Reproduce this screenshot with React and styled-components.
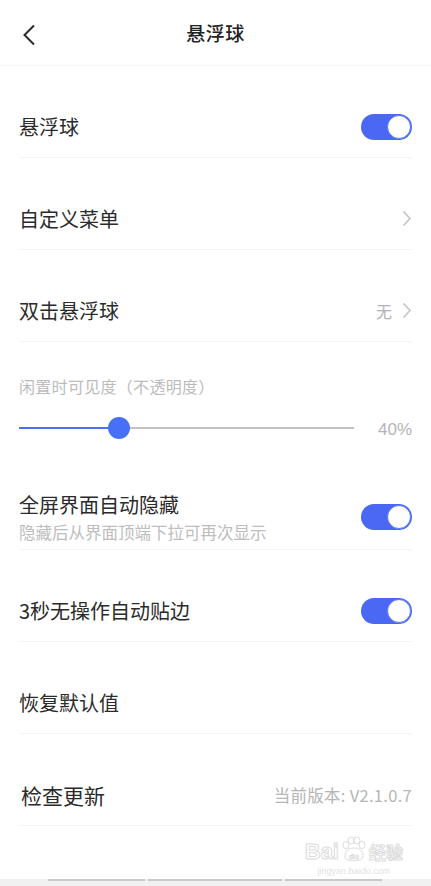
import React from 'react';
import styled, { createGlobalStyle } from 'styled-components';

const GlobalStyle = createGlobalStyle`
  html, body {
    margin: 0;
    padding: 0;
    background: #fff;
  }
  body {
    font-family: "Noto Sans CJK SC", "Noto Sans", sans-serif;
    color: #333;
  }
`;

const Page = styled.div`
  position: relative;
  display: flex;
  flex-direction: column;
  min-height: 100vh;
  width: 431px;
  background: #fff;
  overflow: hidden;
`;

const Header = styled.div`
  position: relative;
  display: flex;
  align-items: center;
  justify-content: center;
  height: 66px;
  border-bottom: 1px solid #f6f6f6;
  box-sizing: border-box;
`;

const BackButton = styled.div`
  position: absolute;
  left: 18px;
  top: 22px;
  width: 22px;
  height: 26px;
  display: flex;
  align-items: center;
  justify-content: center;
`;

const Title = styled.div`
  font-size: 19px;
  font-weight: 500;
  color: #222;
  letter-spacing: 0.5px;
`;

const Row = styled.div`
  display: flex;
  align-items: center;
  justify-content: space-between;
  margin: ${(p) => (p.$tall ? '34px' : '30px')} 19px 0;
  height: ${(p) => (p.$tall ? '66px' : '62px')};
  border-bottom: 1px solid #f3f3f3;
  box-sizing: border-box;
`;

const RowText = styled.div`
  display: flex;
  flex-direction: column;
  gap: 3px;
  margin-top: 2px;
`;

const Label = styled.div`
  font-size: ${(p) => (p.$big ? '21px' : '20px')};
  color: #2b2b2b;
  line-height: 26px;
  margin-left: ${(p) => (p.$big ? '2px' : '0')};
`;

const SubLabel = styled.div`
  font-size: 16.5px;
  color: #bdbdbd;
  line-height: 22px;
`;

const Right = styled.div`
  display: flex;
  align-items: center;
  gap: 10px;
  color: #b3b3b3;
  font-size: 16px;
`;

const Toggle = styled.div`
  position: relative;
  width: 51px;
  height: 26px;
  border-radius: 13px;
  background: #4a68f4;
  &::after {
    content: '';
    position: absolute;
    right: 1px;
    top: 1px;
    width: 22px;
    height: 22px;
    border-radius: 50%;
    background: #fff;
    border: 1px solid #5a78f8;
  }
`;

const SliderSection = styled.div`
  display: flex;
  flex-direction: column;
  padding: 32px 19px 0;
  height: 108px;
  box-sizing: border-box;
`;

const SliderLabel = styled.div`
  font-size: 16px;
  color: #bcbcbc;
  line-height: 24px;
  letter-spacing: 0.3px;
`;

const SliderRow = styled.div`
  display: flex;
  align-items: center;
  justify-content: space-between;
  margin-top: 18px;
  height: 24px;
`;

const Track = styled.div`
  position: relative;
  width: 335px;
  height: 2px;
  background: #c2c2c2;
`;

const TrackFill = styled.div`
  position: absolute;
  left: 0;
  top: 0;
  height: 2px;
  background: #4d6ff5;
`;

const Thumb = styled.div`
  position: absolute;
  top: -10px;
  width: 22px;
  height: 22px;
  margin-left: -11px;
  border-radius: 50%;
  background: #4670f7;
`;

const Percent = styled.div`
  font-family: "Liberation Sans", Arial, sans-serif;
  font-size: 17px;
  color: #b5b5b5;
  margin-top: 4px;
`;

const Version = styled.div`
  font-size: 16.5px;
  color: #b5b5b5;
  letter-spacing: 0.3px;
`;

const Footer = styled.div`
  position: relative;
  margin-top: auto;
  height: 7px;
  background: #f1f1f1;
`;

const FooterSeg = styled.div`
  position: absolute;
  top: 0;
  height: 2px;
  background: #c9c9c9;
`;

const Watermark = styled.div`
  position: absolute;
  right: 28px;
  bottom: 10px;
  display: flex;
  flex-direction: column;
  align-items: center;
  pointer-events: none;
`;

const MarkTop = styled.div`
  display: flex;
  align-items: flex-end;
  font-family: "Liberation Sans", Arial, sans-serif;
  font-size: 22px;
  font-weight: 700;
  color: #fff;
  -webkit-text-stroke: 1px #dcdcdc;
  line-height: 24px;
`;

const MarkCn = styled.span`
  font-family: "Noto Sans CJK SC", sans-serif;
  font-size: 17px;
  margin-left: 2px;
`;

const MarkUrl = styled.div`
  font-family: "Liberation Sans", Arial, sans-serif;
  font-size: 9px;
  color: #e2e2e2;
  margin-top: 2px;
`;

const Chevron = () => (
  <svg width="10" height="17" viewBox="0 0 10 17">
    <path d="M1.5 1.5 L8 8.5 L1.5 15.5" fill="none" stroke="#c4c4c4" strokeWidth="1.6" />
  </svg>
);

const Paw = () => (
  <svg width="28" height="28" viewBox="0 0 28 28">
    <g fill="#fff" stroke="#dcdcdc" strokeWidth="1">
      <ellipse cx="7" cy="9" rx="3" ry="3.6" />
      <ellipse cx="12" cy="4.5" rx="3" ry="3.6" />
      <ellipse cx="18" cy="4.5" rx="3" ry="3.6" />
      <ellipse cx="23" cy="9" rx="3" ry="3.6" />
      <path d="M6 21 C6 14 10 12 15 12 C20 12 24 14 24 21 C24 26 6 26 6 21 Z" />
    </g>
    <text x="15" y="23" fontSize="8" textAnchor="middle" fill="#fff" stroke="#d6d6d6" strokeWidth="0.6" fontFamily="Liberation Sans, sans-serif" fontWeight="700">du</text>
  </svg>
);

const opacity = 40;

const App = () => {
  return (
    <>
      <GlobalStyle />
      <Page>
        <Header>
          <BackButton>
            <svg width="14" height="22" viewBox="0 0 14 22">
              <path d="M12 1.5 L2.5 11 L12 20.5" fill="none" stroke="#2a2a2a" strokeWidth="2" />
            </svg>
          </BackButton>
          <Title>悬浮球</Title>
        </Header>

        <Row>
          <Label>悬浮球</Label>
          <Toggle />
        </Row>

        <Row>
          <Label>自定义菜单</Label>
          <Right>
            <Chevron />
          </Right>
        </Row>

        <Row>
          <Label>双击悬浮球</Label>
          <Right>
            <span>无</span>
            <Chevron />
          </Right>
        </Row>

        <SliderSection>
          <SliderLabel>闲置时可见度（不透明度）</SliderLabel>
          <SliderRow>
            <Track>
              <TrackFill style={{ width: `${(opacity / 134) * 100}%` }} />
              <Thumb style={{ left: `${(opacity / 134) * 100}%` }} />
            </Track>
            <Percent>{opacity}%</Percent>
          </SliderRow>
        </SliderSection>

        <Row $tall>
          <RowText>
            <Label>全屏界面自动隐藏</Label>
            <SubLabel>隐藏后从界面顶端下拉可再次显示</SubLabel>
          </RowText>
          <Toggle />
        </Row>

        <Row>
          <Label>3秒无操作自动贴边</Label>
          <Toggle />
        </Row>

        <Row>
          <Label>恢复默认值</Label>
        </Row>

        <Row>
          <Label $big>检查更新</Label>
          <Version>当前版本: V2.1.0.7</Version>
        </Row>

        <Watermark>
          <MarkTop>
            Bai
            <Paw />
            <MarkCn>经验</MarkCn>
          </MarkTop>
          <MarkUrl>jingyan.baidu.com</MarkUrl>
        </Watermark>

        <Footer>
          <FooterSeg style={{ left: 48, width: 97 }} />
          <FooterSeg style={{ left: 148, width: 134 }} />
          <FooterSeg style={{ left: 285, width: 97 }} />
        </Footer>
      </Page>
    </>
  );
};

export default App;
